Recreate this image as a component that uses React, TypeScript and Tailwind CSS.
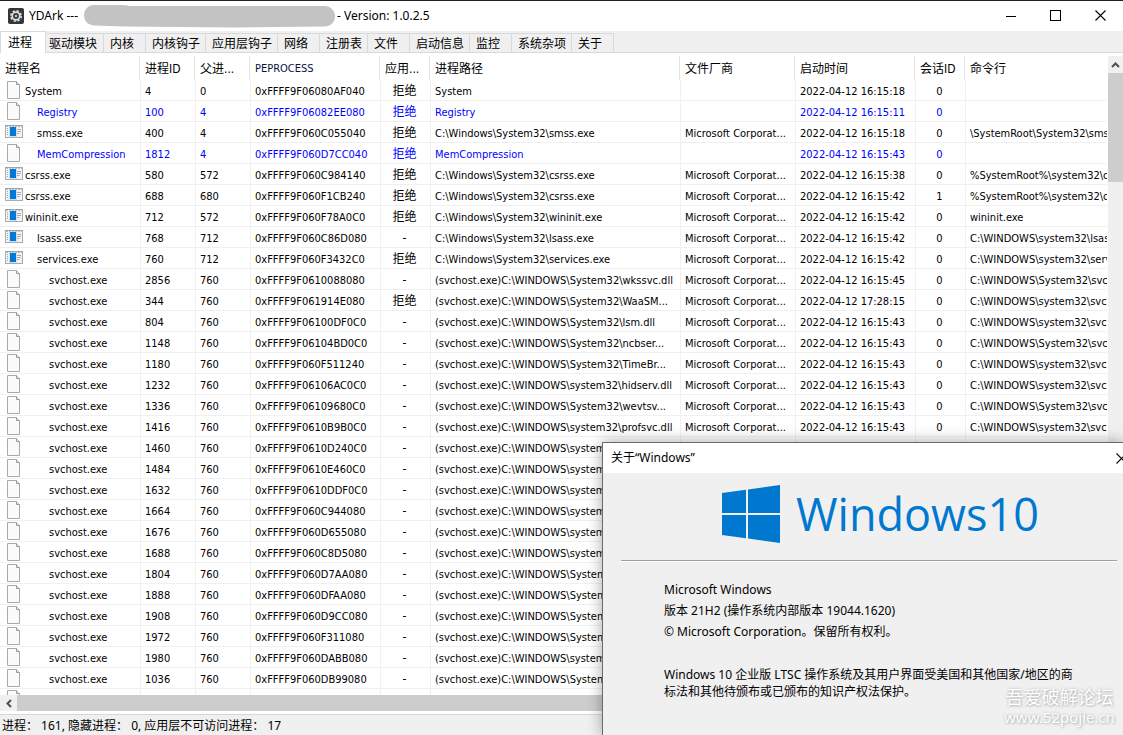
type Kind = "file" | "exe";

interface Row {
  kind: Kind;
  level: number;
  name: string;
  pid: string;
  parent: string;
  eprocess: string;
  access: string;
  path: string;
  vendor?: string;
  time?: string;
  session?: string;
  command?: string;
  system?: boolean;
}

const DENIED = "拒绝";
const VENDOR = "Microsoft Corporat...";
const DAY = "2022-04-12 ";

const core = (
  kind: Kind,
  level: number,
  name: string,
  pid: string,
  parent: string,
  eprocess: string,
  access: string,
  path: string,
  time: string,
  session = "0",
  command = "",
): Row => ({
  kind, level, name, pid, parent, eprocess, access, path, session, command,
  time: DAY + time,
  vendor: path.startsWith("C:") ? VENDOR : "",
  system: name === "Registry" || name === "MemCompression",
});

const svc = (pid: string, eprocess: string, path: string, time?: string, access = "-", command = "C:\\WINDOWS\\system32\\svchost.exe"): Row => ({
  kind: "file",
  level: 2,
  name: "svchost.exe",
  pid,
  parent: "760",
  eprocess,
  access,
  path: "(svchost.exe)C:\\WINDOWS\\" + path,
  vendor: time && VENDOR,
  time: time && DAY + time,
  session: time && "0",
  command: time && command,
});

const UPPER = "C:\\WINDOWS\\System32\\svchost.exe";

const rows: Row[] = [
  core("file", 0, "System", "4", "0", "0xFFFF9F06080AF040", DENIED, "System", "16:15:18"),
  core("file", 1, "Registry", "100", "4", "0xFFFF9F06082EE080", DENIED, "Registry", "16:15:11"),
  core("exe", 1, "smss.exe", "400", "4", "0xFFFF9F060C055040", DENIED, "C:\\Windows\\System32\\smss.exe", "16:15:18", "0", "\\SystemRoot\\System32\\smss.exe"),
  core("file", 1, "MemCompression", "1812", "4", "0xFFFF9F060D7CC040", DENIED, "MemCompression", "16:15:43"),
  core("exe", 0, "csrss.exe", "580", "572", "0xFFFF9F060C984140", DENIED, "C:\\Windows\\System32\\csrss.exe", "16:15:38", "0", "%SystemRoot%\\system32\\csrss.exe"),
  core("exe", 0, "csrss.exe", "688", "680", "0xFFFF9F060F1CB240", DENIED, "C:\\Windows\\System32\\csrss.exe", "16:15:42", "1", "%SystemRoot%\\system32\\csrss.exe"),
  core("exe", 0, "wininit.exe", "712", "572", "0xFFFF9F060F78A0C0", DENIED, "C:\\Windows\\System32\\wininit.exe", "16:15:42", "0", "wininit.exe"),
  core("exe", 1, "lsass.exe", "768", "712", "0xFFFF9F060C86D080", "-", "C:\\Windows\\System32\\lsass.exe", "16:15:42", "0", "C:\\WINDOWS\\system32\\lsass.exe"),
  core("exe", 1, "services.exe", "760", "712", "0xFFFF9F060F3432C0", DENIED, "C:\\Windows\\System32\\services.exe", "16:15:42", "0", "C:\\WINDOWS\\system32\\services.exe"),
  svc("2856", "0xFFFF9F0610088080", "System32\\wkssvc.dll", "16:15:45", "-", UPPER),
  svc("344", "0xFFFF9F061914E080", "System32\\WaaSM...", "17:28:15", DENIED),
  svc("804", "0xFFFF9F06100DF0C0", "System32\\lsm.dll", "16:15:43"),
  svc("1148", "0xFFFF9F06104BD0C0", "System32\\ncbser...", "16:15:43", "-", UPPER),
  svc("1180", "0xFFFF9F060F511240", "System32\\TimeBr...", "16:15:43"),
  svc("1232", "0xFFFF9F06106AC0C0", "system32\\hidserv.dll", "16:15:43"),
  svc("1336", "0xFFFF9F06109680C0", "System32\\wevtsv...", "16:15:43", "-", UPPER),
  svc("1416", "0xFFFF9F0610B9B0C0", "system32\\profsvc.dll", "16:15:43"),
  svc("1460", "0xFFFF9F0610D240C0", "system"),
  svc("1484", "0xFFFF9F0610E460C0", "system"),
  svc("1632", "0xFFFF9F0610DDF0C0", "system"),
  svc("1664", "0xFFFF9F060C944080", "system"),
  svc("1676", "0xFFFF9F060D655080", "system"),
  svc("1688", "0xFFFF9F060C8D5080", "system"),
  svc("1804", "0xFFFF9F060D7AA080", "System"),
  svc("1888", "0xFFFF9F060DFAA080", "System"),
  svc("1908", "0xFFFF9F060D9CC080", "System"),
  svc("1972", "0xFFFF9F060F311080", "System"),
  svc("1980", "0xFFFF9F060DABB080", "system"),
  svc("1036", "0xFFFF9F060DB99080", "System"),
];

const tabs = ["驱动模块", "内核", "内核钩子", "应用层钩子", "网络", "注册表", "文件", "启动信息", "监控", "系统杂项", "关于"];

const columns = ["进程名", "进程ID", "父进...", "PEPROCESS", "应用...", "进程路径", "文件厂商", "启动时间", "会话ID", "命令行"];

const indents = ["pt-[3px] pl-0", "pt-[3px] pl-3", "pt-[3px] pl-6"];

function FileIcon() {
  return (
    <svg width="14" height="18" viewBox="0 0 14 18" className="mb-px ml-[7px] shrink-0">
      <path d="M.5 .5H9.5L12.500 3.500V17.5H.5Z" fill="#fafbfa" stroke="#a9a9a9" />
      <path d="M9.5 .5V3.500H12.500" fill="#e6e6e6" stroke="#9b9b9b" />
    </svg>
  );
}

function ExeIcon() {
  return (
    <svg width="18" height="13" viewBox="0 0 18 13" className="mb-px ml-[5px] shrink-0">
      <rect x=".5" y=".5" width="17" height="12" fill="#f3f3f3" stroke="#a8adb0" />
      <path d="M1 1H17" stroke="#7f9295" strokeDasharray="2 1" />
      <path d="M2.5 3V11" stroke="#9aa6b2" strokeDasharray="1 1" />
      <rect x="4" y="2" width="8" height="10" fill="#cfe0ef" />
      <rect x="5" y="2" width="6" height="9" fill="#0078d7" />
      <path d="M12 4.5H16M12 6.5H16M12 8.5H14.5" stroke="#a9a9b2" />
    </svg>
  );
}

function CloseGlyph() {
  return (
    <svg width="11" height="11" viewBox="0 0 11 11" className="shrink-0">
      <path d="M.5 .5L10.5 10.5M10.5 .5L.5 10.5" stroke="#000" strokeWidth="1.1" />
    </svg>
  );
}

function TitleBar() {
  return (
    <header className="flex h-[31px] shrink-0 items-center border-t border-[#231f20] bg-white text-xs">
      <svg width="16" height="16" viewBox="0 0 16 16" className="mr-[5px] mb-px ml-2 shrink-0">
        <rect width="16" height="16" rx="2" fill="#35363a" />
        <circle cx="8" cy="8" r="5.2" fill="none" stroke="#dcdee0" strokeWidth="1.6" strokeDasharray="2.3 1.78" />
        <circle cx="8" cy="8" r="3.8" fill="none" stroke="#dcdee0" strokeWidth="1.8" />
        <circle cx="8" cy="8" r="1.2" fill="#c3c6ca" />
      </svg>
      <h1 className="flex items-center whitespace-nowrap">
        <span className="w-[55px]">YDArk ---</span>
        <svg width="251" height="23" viewBox="0 0 251 23" className="shrink-0">
          <path d="M10 0H38Q42 0 46 1H240C247 1 251 6 251 11C251 17 247 21.500 240 21.500L150 22.500L40 21.500L10 20.500C3 20 0 15 0 10C0 5 4 0 10 0Z" fill="#c3c3c3" />
        </svg>
        <span className="ml-0.5">- Version: 1.0.2.5</span>
      </h1>
      <div className="ml-auto flex h-full">
        <button aria-label="最小化" className="flex w-[45px] items-center justify-center">
          <span className="h-px w-[10px] bg-black" />
        </button>
        <button aria-label="最大化" className="flex w-[45px] items-center justify-center pb-px">
          <span className="size-[11px] border border-black" />
        </button>
        <button aria-label="关闭" className="flex w-[45px] items-center justify-center pb-px">
          <CloseGlyph />
        </button>
      </div>
    </header>
  );
}

function TabBar() {
  return (
    <nav className="flex h-[22px] shrink-0 items-end border-b border-[#d9d9d9] bg-[#f0f0f0] text-xs leading-4">
      <button className="z-10 -mb-px h-[22px] w-[46px] shrink-0 border border-b-0 border-[#d9d9d9] bg-white pl-[7px] text-left">进程</button>
      {tabs.map((t, i) => (
        <button
          key={t}
          className={
            i === 0
              ? "h-[19px] w-[58px] border-t border-r border-[#d9d9d9] pt-0.5 pl-[3px] text-left whitespace-nowrap"
              : "h-[19px] min-w-[42px] border-t border-r border-[#d9d9d9] pt-0.5 pr-[5px] pl-1.5 text-left whitespace-nowrap"
          }
        >
          {t}
        </button>
      ))}
    </nav>
  );
}

const cell = "h-[21px] overflow-hidden border-b border-l border-[#f0f0f0] p-0 pt-[3px] pl-1 whitespace-nowrap";
const centered = "h-[21px] overflow-hidden border-b border-l border-[#f0f0f0] p-0 pt-[3px] pr-0.5 text-center whitespace-nowrap";

function ProcessTable() {
  return (
    <table className="w-full table-fixed border-separate border-spacing-0 text-[11px] leading-4">
      <colgroup>
        <col className="w-[140px]" />
        <col className="w-[55px]" />
        <col className="w-[55px]" />
        <col className="w-[130px]" />
        <col className="w-[50px]" />
        <col className="w-[250px]" />
        <col className="w-[115px]" />
        <col className="w-[120px]" />
        <col className="w-[50px]" />
        <col />
      </colgroup>
      <thead>
        <tr>
          {columns.map((c) => (
            <th
              key={c}
              className={
                c === "PEPROCESS"
                  ? "h-6 border-r border-[#e5e5e5] p-0 pt-0.5 pl-[5px] text-left font-normal text-[#0a1440]"
                  : "h-6 overflow-hidden border-r border-[#e5e5e5] p-0 pt-0.5 pl-[5px] text-left text-xs font-normal whitespace-nowrap last:border-r-0"
              }
            >
              {c}
            </th>
          ))}
        </tr>
      </thead>
      <tbody>
        {rows.map((r) => (
          <tr key={r.pid} className={r.system ? "text-[#0000ff]" : "text-black"}>
            <td className="h-[21px] border-b border-[#f0f0f0] p-0">
              <div className="flex h-5 items-center">
                <span className="flex w-[25px] shrink-0">{r.kind === "file" ? <FileIcon /> : <ExeIcon />}</span>
                <span className={indents[r.level]}>{r.name}</span>
              </div>
            </td>
            <td className={cell}>{r.pid}</td>
            <td className={cell}>{r.parent}</td>
            <td className={cell}>{r.eprocess}</td>
            <td className={centered}>
              <span className="text-xs">{r.access}</span>
            </td>
            <td className={cell}>{r.path}</td>
            <td className={cell}>{r.vendor}</td>
            <td className={cell}>{r.time}</td>
            <td className={centered}>{r.session}</td>
            <td className={cell}>{r.command}</td>
          </tr>
        ))}
        <tr>
          <td className="h-[21px] p-0">
            <FileIcon />
          </td>
          {columns.slice(1).map((c) => (
            <td key={c} className={cell} />
          ))}
        </tr>
      </tbody>
    </table>
  );
}

function WindowsLogo() {
  return (
    <svg width="58" height="58" viewBox="0 0 58 58" fill="#0078d0" className="shrink-0">
      <path d="M0 8L24 4.700V28H0Z" />
      <path d="M26 4.400L58 0V28H26Z" />
      <path d="M0 30H24V53.300L0 50Z" />
      <path d="M26 30H58V58L26 53.600Z" />
    </svg>
  );
}

function AboutDialog() {
  return (
    <section
      role="dialog"
      aria-labelledby="about-title"
      className="absolute top-[442px] right-0 bottom-0 left-[602px] z-20 overflow-hidden border-t border-l border-[#6b6b6b] bg-[#f0f0f0] text-xs shadow-[0_0_14px_rgba(0,0,0,0.35)]"
    >
      <div className="flex h-[30px] items-center justify-between bg-white pl-2">
        <h2 id="about-title">关于“Windows”</h2>
        <button aria-label="关闭" className="-mr-1 flex">
          <CloseGlyph />
        </button>
      </div>
      <div className="mt-3 flex items-center gap-4 pl-[119px] text-[#0078d0]">
        <WindowsLogo />
        <div className="flex font-['Open_Sans','Noto_Sans',sans-serif] text-[45px] leading-[58px] font-medium">
          <span>Windows</span>
          <span>10</span>
        </div>
      </div>
      <hr className="mt-[17px] mr-[6px] ml-[18px] h-0.5 border-t border-b border-t-[#a0a0a0] border-b-white" />
      <div className="mt-[17px] pl-[61px] leading-[21px] whitespace-nowrap">
        <p>Microsoft Windows</p>
        <p>版本 21H2 (操作系统内部版本 19044.1620)</p>
        <p>© Microsoft Corporation。保留所有权利。</p>
        <p className="mt-6 leading-[17px]">
          Windows 10 企业版 LTSC 操作系统及其用户界面受美国和其他国家/地区的商
          <br />
          标法和其他待颁布或已颁布的知识产权法保护。
        </p>
      </div>
      <div className="absolute right-2 bottom-2 text-center whitespace-nowrap text-white [text-shadow:0_0_3px_#b5b5b5,1px_1px_2px_#c0c0c0]">
        <p className="text-lg leading-5">吾爱破解论坛</p>
        <p className="text-[15px] leading-5">www.52pojie.cn</p>
      </div>
    </section>
  );
}

export default function App() {
  return (
    <div className="relative flex h-screen flex-col overflow-hidden bg-white font-['Noto_Sans','Noto_Sans_CJK_SC',sans-serif] text-black">
      <TitleBar />
      <TabBar />
      <main className="flex min-h-0 flex-1 pt-[3px] font-['DejaVu_Sans_Condensed','Noto_Sans_CJK_SC',sans-serif]">
        <div className="min-h-0 min-w-0 flex-1 overflow-hidden">
          <ProcessTable />
        </div>
        <div className="ml-px flex w-[15px] shrink-0 flex-col bg-[#f0f0f0]">
          <button aria-label="向上滚动" className="flex h-[17px] items-center justify-center">
            <svg width="9" height="6" viewBox="0 0 9 6">
              <path d="M1 5L4.500 1.500L8 5" fill="none" stroke="#505050" strokeWidth="2" />
            </svg>
          </button>
          <div className="h-[109px] bg-[#cdcdcd]" />
        </div>
      </main>
      <div className="mb-[3px] flex h-4 shrink-0 bg-[#f0f0f0]">
        <button aria-label="向左滚动" className="flex w-[17px] items-center justify-center">
          <svg width="6" height="9" viewBox="0 0 6 9">
            <path d="M5 1L1.500 4.500L5 8" fill="none" stroke="#505050" strokeWidth="2" />
          </svg>
        </button>
        <div className="flex-1 bg-[#cdcdcd]" />
      </div>
      <footer className="flex h-[21px] shrink-0 items-center border-t border-[#d7d7d7] bg-[#f0f0f0] pt-0.5 pl-0.5 text-xs whitespace-pre">
        进程： 161, 隐藏进程： 0, 应用层不可访问进程： 17
      </footer>
      <AboutDialog />
    </div>
  );
}
